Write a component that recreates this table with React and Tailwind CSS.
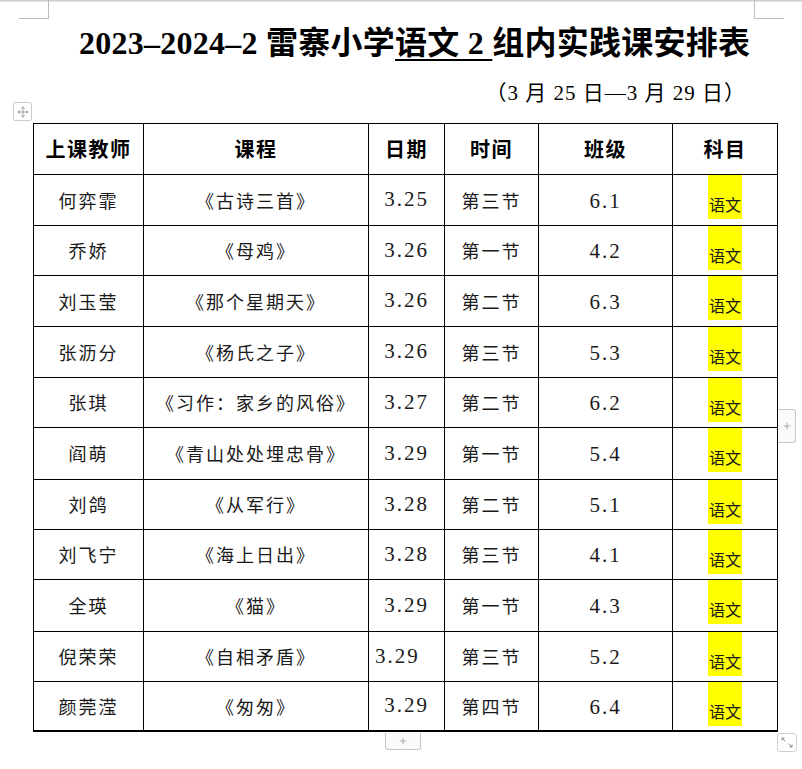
import React from "react";
import { Move, Plus } from "lucide-react";

const rows = [
  { name: "何弈霏", course: "《古诗三首》", date: "3.25", time: "第三节", cls: "6.1", h: "h-[51px]" },
  { name: "乔娇", course: "《母鸡》", date: "3.26", time: "第一节", cls: "4.2", h: "h-[50px]" },
  { name: "刘玉莹", course: "《那个星期天》", date: "3.26", time: "第二节", cls: "6.3", h: "h-[51px]" },
  { name: "张沥分", course: "《杨氏之子》", date: "3.26", time: "第三节", cls: "5.3", h: "h-[51px]" },
  { name: "张琪", course: "《习作：家乡的风俗》", date: "3.27", time: "第二节", cls: "6.2", h: "h-[50px]" },
  { name: "阎萌", course: "《青山处处埋忠骨》", date: "3.29", time: "第一节", cls: "5.4", h: "h-[52px]" },
  { name: "刘鸽", course: "《从军行》", date: "3.28", time: "第二节", cls: "5.1", h: "h-[50px]" },
  { name: "刘飞宁", course: "《海上日出》", date: "3.28", time: "第三节", cls: "4.1", h: "h-[50px]" },
  { name: "全瑛", course: "《猫》", date: "3.29", time: "第一节", cls: "4.3", h: "h-[52px]" },
  { name: "倪荣荣", course: "《自相矛盾》", date: "3.29", time: "第三节", cls: "5.2", h: "h-[50px]", dateLeft: true },
  { name: "颜莞滢", course: "《匆匆》", date: "3.29", time: "第四节", cls: "6.4", h: "h-[50px]", last: true },
];

const headers = ["上课教师", "课程", "日期", "时间", "班级", "科目"];

function Cell({ children, className = "" }) {
  return (
    <div className={`border-r border-black flex items-center justify-center ${className}`}>
      {children}
    </div>
  );
}

export default function App() {
  return (
    <div className="relative w-[802px] h-[769px] bg-white overflow-hidden text-black font-['Liberation_Serif','Noto_Sans_CJK_SC',serif]">
      <div className="h-[1px] bg-[#cfcfcf]" />
      <div className="h-[1px] bg-[#e6e6e6]" />

      {/* Title */}
      <div className="mt-[21px] h-[40px] leading-[40px] pl-[79px] text-[32px] font-bold tracking-[0.25px] whitespace-nowrap">
        2023–2024–2 雷寨小学
        <span className="underline decoration-2 underline-offset-[5px]">语文 2 </span>
        组内实践课安排表
      </div>

      {/* Subtitle */}
      <div className="mt-[16px] h-[28px] leading-[28px] flex justify-end pr-[56px] text-[21px] tracking-[1px] whitespace-nowrap">
        （3 月 25 日—3 月 29 日）
      </div>

      {/* Table */}
      <div className="mt-[16px] ml-[33px] w-[745px] border-l border-t border-black grid grid-cols-[110px_225px_76px_94px_134px_105px]">
        {headers.map((h) => (
          <Cell key={h} className="h-[51px] border-b font-['Noto_Sans_CJK_SC',sans-serif] font-bold text-[20px] tracking-[1.5px]">
            {h}
          </Cell>
        ))}
        {rows.map((r, i) => {
          const bb = r.last ? "border-b-2" : "border-b";
          const cjk = "font-['Noto_Sans_CJK_SC',sans-serif] text-[18px] tracking-[2px] text-[#1a1a1a]";
          const num = "font-['Liberation_Serif',serif] text-[21px] tracking-[2px] text-[#1a1a1a]";
          return (
            <React.Fragment key={i}>
              <Cell className={`${r.h} ${bb} ${cjk}`}>{r.name}</Cell>
              <Cell className={`${r.h} ${bb} ${cjk} whitespace-nowrap`}>{r.course}</Cell>
              <Cell className={`${r.h} ${bb} ${num} ${r.dateLeft ? "justify-start pl-[6px]" : ""}`}>{r.date}</Cell>
              <Cell className={`${r.h} ${bb} ${cjk}`}>{r.time}</Cell>
              <Cell className={`${r.h} ${bb} ${num} pt-[3px]`}>{r.cls}</Cell>
              <Cell className={`${r.h} ${bb} items-start`}>
                <span className="h-[44px] px-[1px] pb-[7px] bg-[#ffff00] flex items-end text-[16px] leading-[16px] font-['Noto_Sans_CJK_SC',sans-serif] text-[#1a1a1a]">
                  语文
                </span>
              </Cell>
            </React.Fragment>
          );
        })}
      </div>

      {/* Corner marks */}
      <div className="absolute left-[19px] top-0 w-[30px] h-[19px] border-r border-b border-[#bdbdbd]" />
      <div className="absolute left-[754px] top-0 w-[30px] h-[19px] border-l border-b border-[#bdbdbd]" />

      {/* Table move handle */}
      <div className="absolute left-[13px] top-[102px] w-[19px] h-[19px] border border-[#cccccc] rounded-[2px] bg-white flex items-center justify-center">
        <Move size={12} strokeWidth={1.5} color="#8a8a8a" />
      </div>

      {/* Right add button */}
      <div className="absolute left-[778px] top-[409px] w-[18px] h-[34px] border border-l-0 border-[#c6c6c6] rounded-r-[3px] bg-[#fafafa] flex items-center justify-center">
        <Plus size={10} strokeWidth={1.5} color="#808080" />
      </div>

      {/* Bottom add button */}
      <div className="absolute left-[385px] top-[733px] w-[36px] h-[17px] border border-t-0 border-[#c6c6c6] rounded-b-[3px] bg-[#fafafa] flex items-center justify-center">
        <Plus size={10} strokeWidth={1.5} color="#808080" />
      </div>

      {/* Resize handle */}
      <div className="absolute left-[777px] top-[733px] w-[20px] h-[19px] border border-[#d0d0d0] rounded-[3px] bg-white flex items-center justify-center">
        <svg width="14" height="13" viewBox="0 0 14 13" fill="none" stroke="#8a8a8a" strokeWidth="1">
          <path d="M2 2 L5.5 5.5 M2 2 L2 4.5 M2 2 L4.5 2" />
          <path d="M12 11 L8.5 7.5 M12 11 L12 8.5 M12 11 L9.5 11" />
        </svg>
      </div>
    </div>
  );
}
